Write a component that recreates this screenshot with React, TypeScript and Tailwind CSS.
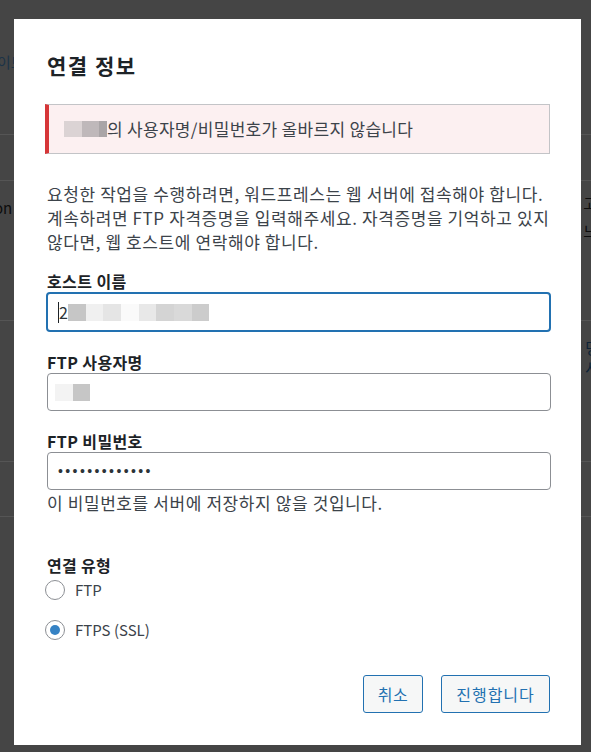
import { ReactNode } from "react";

const blur = (colors: string[], h = "h-[17px]") =>
  colors.map((c, i) => (
    <span key={i} className={`inline-block w-[17.7px] ${h}`} style={{ backgroundColor: c }} />
  ));

function Field({
  label,
  focused,
  children,
}: {
  label: string;
  focused?: boolean;
  children: ReactNode;
}) {
  return (
    <div className="flex flex-col">
      <label className="text-[16px] leading-[22px] font-bold tracking-[0.4px] text-[#1d2327] pl-[2px]">{label}</label>
      <div
        className={
          focused
            ? "ml-[1px] -mr-[1px] h-[40px] rounded-[4px] border-2 border-[#2271b1] bg-white flex items-center pl-[10px]"
            : "ml-[2px] -mr-[1px] h-[38px] rounded-[4px] border border-[#8c8f94] bg-white flex items-center pl-[7px]"
        }
      >
        {children}
      </div>
    </div>
  );
}

function Radio({ label, checked }: { label: string; checked?: boolean }) {
  return (
    <div className="flex items-center gap-[10px] h-[20px]">
      <span className="w-5 h-5 rounded-full border border-[#8c8f94] bg-white flex items-center justify-center">
        {checked && <span className="w-[10px] h-[10px] rounded-full bg-[#3582c4]" />}
      </span>
      <span className="text-[15px] leading-[20px] text-[#3c434a]">{label}</span>
    </div>
  );
}

function Backdrop() {
  return (
    <div className="flex flex-col h-full text-[15px] leading-[20px]">
      <div className="h-[135px] border-b border-[#555555] pt-[52px] -ml-[3px] text-[#1c3347]">이트</div>
      <div className="h-[46px] border-b border-[#555555]" />
      <div className="h-[140px] border-b border-[#555555] flex justify-between pt-[12px] text-[#0c0c0c]">
        <span className="-ml-[6px] pt-[5px]">on</span>
        <span className="flex flex-col -mr-[6px]">
          <span>고</span>
          <span className="pt-[8px]">느</span>
        </span>
      </div>
      <div className="h-[141px] border-b border-[#555555] flex justify-end pt-[17px] text-[#0c2236]">
        <span className="flex flex-col -mr-[8px]">
          <span>명</span>
          <span>사</span>
        </span>
      </div>
      <div className="h-[55px] border-b border-[#555555]" />
      <div className="flex-1" />
    </div>
  );
}

export default function App() {
  return (
    <div className="relative w-[591px] h-[752px] overflow-hidden bg-[#454545] font-['Noto_Sans_CJK_KR','Liberation_Sans',sans-serif]">
      <Backdrop />

      <div className="absolute left-[14px] top-[19px] w-[567px] h-[726px] bg-white flex flex-col px-[31px] pt-[32px] pb-[32px]">
        <h1 className="text-[21px] leading-[28px] font-bold tracking-[1.5px] text-[#1d2327] pl-[2px]">연결 정보</h1>

        <div className="mt-[25px] h-[50px] flex items-center bg-[#fcf0f1] border border-[#c3c4c7] border-l-4 border-l-[#d63638] pl-[15px] text-[17px] tracking-[0.3px] text-[#3c434a] whitespace-nowrap">
          <span className="inline-block w-[18px] h-[16px] bg-[#dbd3d4]" />
          <span className="inline-block w-[17px] h-[16px] bg-[#bfb8ba]" />
          <span className="inline-block w-[8px] h-[16px] bg-[#aaa5a7]" />
          <span>의 사용자명/비밀번호가 올바르지 않습니다</span>
        </div>

        <p className="mt-[28px] text-[17px] leading-[24px] tracking-[0.6px] text-[#3c434a] pl-[2px] whitespace-nowrap">
          요청한 작업을 수행하려면, 워드프레스는 웹 서버에 접속해야 합니다.
          <br />
          계속하려면 FTP 자격증명을 입력해주세요. 자격증명을 기억하고 있지
          <br />
          않다면, 웹 호스트에 연락해야 합니다.
        </p>

        <div className="mt-[16px]">
          <Field label="호스트 이름" focused>
            <span className="w-px h-[21px] bg-[#1d2327]" />
            <span className="text-[16px] leading-[20px] text-[#2c3338]">2</span>
            <span className="flex">
              {blur(["#c6c6c6", "#f0f0f0", "#e5e5e5", "#fafafa", "#e8e8e8", "#d4d4d4", "#d9d9d9", "#cccccc"])}
            </span>
          </Field>
        </div>

        <div className="mt-[19px]">
          <Field label="FTP 사용자명">
            <span className="flex">{blur(["#f3f3f3", "#c6c6c6"])}</span>
          </Field>
        </div>

        <div className="mt-[19px]">
          <Field label="FTP 비밀번호">
            <span className="pl-[3px] font-['Liberation_Sans',sans-serif] text-[14px] tracking-[2.4px] text-[#2c3338]">
              •••••••••••••
            </span>
          </Field>
        </div>

        <p className="mt-[2px] text-[17px] leading-[22px] tracking-[0.6px] text-[#3c434a] pl-[2px]">
          이 비밀번호를 서버에 저장하지 않을 것입니다.
        </p>

        <div className="mt-[40px] text-[16px] leading-[22px] font-bold tracking-[0.3px] text-[#1d2327] pl-[2px]">연결 유형</div>
        <div className="mt-[4px] flex flex-col gap-[20px]">
          <Radio label="FTP" />
          <Radio label="FTPS (SSL)" checked />
        </div>

        <div className="flex-1" />

        <div className="flex justify-end gap-[18px]">
          <button className="h-[38px] w-[60px] rounded-[3px] border border-[#2271b1] bg-[#f6f7f7] text-[16px] tracking-[0.5px] text-[#2271b1]">
            취소
          </button>
          <button className="h-[38px] w-[109px] rounded-[3px] border border-[#2271b1] bg-[#f6f7f7] text-[16px] tracking-[1px] text-[#2271b1]">
            진행합니다
          </button>
        </div>
      </div>
    </div>
  );
}
